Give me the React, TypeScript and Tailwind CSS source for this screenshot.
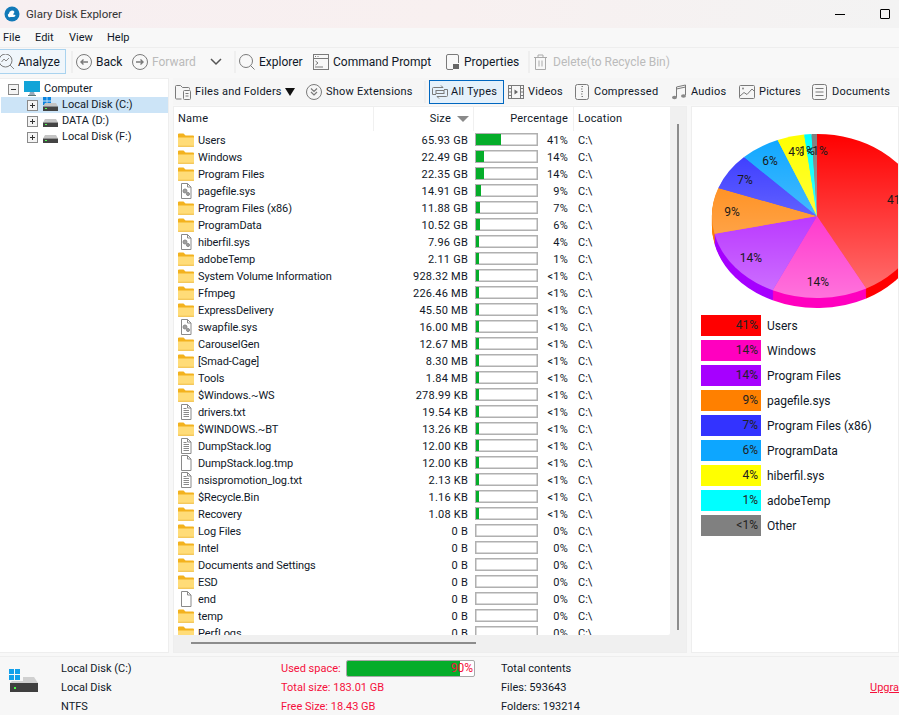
import React from "react";

const G = "#7a7a7a";
const Ico = ({ children, w = 16, h = 16, className = "" }: { children: React.ReactNode; w?: number; h?: number; className?: string }) => (
  <svg width={w} height={h} viewBox={`0 0 ${w} ${h}`} fill="none" stroke={G} strokeWidth="1" className={`shrink-0 ${className}`}>{children}</svg>
);

const Folder = () => (
  <svg width="16" height="14" viewBox="0 0 16 14" className="shrink-0">
    <path d="M0 2a1 1 0 0 1 1-1.5h4.5L7.5 2.5H15a1 1 0 0 1 1 1V6H0Z" fill="#f3b21e" />
    <path d="M0 4.5h16V13a1 1 0 0 1-1 1H1a1 1 0 0 1-1-1Z" fill="#ffdc78" />
    <path d="M0 13.2h16" stroke="#f0c050" />
  </svg>
);
const Page = ({ children }: { children?: React.ReactNode }) => (
  <svg width="16" height="16" viewBox="0 0 16 16" fill="none" className="shrink-0">
    <path d="M3.5.5h6l3.5 3.5v11.5H3.5Z" fill="#fff" stroke="#8a8a8a" />
    <path d="M9.5.5V4H13" stroke="#8a8a8a" />
    {children}
  </svg>
);
const FileIcon = ({ t }: { t?: string }) => {
  if (t === "sys")
    return (
      <Page>
        <circle cx="7" cy="8" r="2" fill="#a0a0a0" stroke="#8a8a8a" />
        <circle cx="10" cy="11" r="1.5" fill="#a0a0a0" stroke="#8a8a8a" />
      </Page>
    );
  if (t === "txt")
    return (
      <Page>
        <path d="M5.5 4.5h3M5.5 6.5h5.5M5.5 8.5h5.5M5.5 10.5h5.5M5.5 12.5h5.5" stroke="#8a8a8a" />
      </Page>
    );
  if (t === "blank") return <Page />;
  return <Folder />;
};

const rows: [string, string, number, string, string?][] = [
  ["Users", "65.93 GB", 25, "41%"],
  ["Windows", "22.49 GB", 8, "14%"],
  ["Program Files", "22.35 GB", 8, "14%"],
  ["pagefile.sys", "14.91 GB", 5, "9%", "sys"],
  ["Program Files (x86)", "11.88 GB", 4, "7%"],
  ["ProgramData", "10.52 GB", 4, "6%"],
  ["hiberfil.sys", "7.96 GB", 3, "4%", "sys"],
  ["adobeTemp", "2.11 GB", 3, "1%"],
  ["System Volume Information", "928.32 MB", 3, "<1%"],
  ["Ffmpeg", "226.46 MB", 3, "<1%"],
  ["ExpressDelivery", "45.50 MB", 3, "<1%"],
  ["swapfile.sys", "16.00 MB", 3, "<1%", "sys"],
  ["CarouselGen", "12.67 MB", 3, "<1%"],
  ["[Smad-Cage]", "8.30 MB", 3, "<1%"],
  ["Tools", "1.84 MB", 3, "<1%"],
  ["$Windows.~WS", "278.99 KB", 3, "<1%"],
  ["drivers.txt", "19.54 KB", 3, "<1%", "txt"],
  ["$WINDOWS.~BT", "13.26 KB", 3, "<1%"],
  ["DumpStack.log", "12.00 KB", 3, "<1%", "txt"],
  ["DumpStack.log.tmp", "12.00 KB", 3, "<1%", "blank"],
  ["nsispromotion_log.txt", "2.13 KB", 3, "<1%", "txt"],
  ["$Recycle.Bin", "1.16 KB", 3, "<1%"],
  ["Recovery", "1.08 KB", 3, "<1%"],
  ["Log Files", "0 B", 0, "0%"],
  ["Intel", "0 B", 0, "0%"],
  ["Documents and Settings", "0 B", 0, "0%"],
  ["ESD", "0 B", 0, "0%"],
  ["end", "0 B", 0, "0%", "blank"],
  ["temp", "0 B", 0, "0%"],
  ["PerfLogs", "0 B", 0, "0%"],
];

const legend: [string, string, string][] = [
  ["41%", "Users", "#ff0000"],
  ["14%", "Windows", "#ff00bf"],
  ["14%", "Program Files", "#a600ff"],
  ["9%", "pagefile.sys", "#ff8000"],
  ["7%", "Program Files (x86)", "#3333ff"],
  ["6%", "ProgramData", "#0da6ff"],
  ["4%", "hiberfil.sys", "#ffff00"],
  ["1%", "adobeTemp", "#00ffff"],
  ["<1%", "Other", "#808080"],
];

const CX = 125, CY = 109, RX = 105, RY = 82;
const stops = [0, 152, 205, 257.5, 290, 316, 338, 353, 357, 360];
const pt = (a: number, dy = 0) => {
  const r = (a * Math.PI) / 180;
  return `${(CX + RX * Math.sin(r)).toFixed(2)} ${(CY - RY * Math.cos(r) + dy).toFixed(2)}`;
};
const slice = (i: number, dy = 0) =>
  `M${CX} ${CY + dy}L${pt(stops[i], dy)}A${RX} ${RY} 0 ${stops[i + 1] - stops[i] > 180 ? 1 : 0} 1 ${pt(stops[i + 1], dy)}Z`;
const labels: [string, number, number, string?][] = [
  ["41%", 195, 93, "start"],
  ["14%", 126, 175],
  ["14%", 59, 151],
  ["9%", 40, 105],
  ["7%", 53, 73],
  ["6%", 78, 54],
  ["4%", 104, 45],
  ["1%", 115, 44],
  ["<1%", 125, 44],
];

const Pie = () => (
  <svg width="240" height="205" viewBox="0 0 240 205" className="shrink-0 block">
    <defs>
      <linearGradient id="sheen" gradientUnits="userSpaceOnUse" x1="0" y1="27" x2="0" y2="191">
        <stop offset="0" stopColor="#fff" stopOpacity="0" />
        <stop offset="1" stopColor="#fff" stopOpacity="0.45" />
      </linearGradient>
    </defs>
    {[10, 9, 8, 7, 6, 5, 4, 3, 2, 1].map((d) =>
      legend.map((l, i) => <path key={`${d}-${i}`} d={slice(i, d)} fill={l[2]} />)
    )}
    {legend.map((l, i) => (
      <path key={i} d={slice(i)} fill={l[2]} />
    ))}
    {legend.map((l, i) => (
      <path key={i} d={slice(i)} fill="url(#sheen)" />
    ))}
    {labels.map(([t, x, y, a], i) => (
      <text key={i} x={x} y={y + 4} textAnchor={(a as "start") || "middle"} fontSize="12" fill="#1a1a1a">{t}</text>
    ))}
  </svg>
);

const Disk = ({ win }: { win?: boolean }) => (
  <span className="relative w-[15px] h-[16px] shrink-0 block">
    {win && (
      <svg width="8" height="8" viewBox="0 0 8 8" className="absolute left-0 top-0">
        <path d="M0 0h3.6v3.6H0ZM4.4 0H8v3.6H4.4ZM0 4.4h3.6V8H0ZM4.4 4.4H8V8H4.4Z" fill="#0a84e0" />
      </svg>
    )}
    <svg width="15" height="8" viewBox="0 0 15 8" className="absolute left-0 top-[6px]">
      <path d="M2 0h11l2 3.5H0Z" fill="#c4c4c4" />
      <rect x="0" y="3.5" width="15" height="4.5" fill="#444" />
      <rect x="2" y="5" width="2" height="1" fill="#5f5" />
    </svg>
  </span>
);

const PlusBox = ({ minus }: { minus?: boolean }) => (
  <svg width="11" height="11" viewBox="0 0 11 11" className="shrink-0">
    <rect x=".5" y=".5" width="10" height="10" fill="#f4f4f4" stroke="#8a8a8a" />
    <path d={minus ? "M3 5.5h5" : "M3 5.5h5M5.5 3v5"} stroke="#333" />
  </svg>
);

const Sep = ({ className = "" }: { className?: string }) => <span className={`w-[2px] h-[22px] bg-[#efefef] shrink-0 ${className}`} />;

const Pct = ({ w }: { w: number }) => (
  <div className="w-[63px] h-[13px] border border-[#b0b0b0] bg-white shrink-0 shadow-[inset_0_0_0_0.5px_#b0b0b0]">
    <div className="h-full bg-[#05ad2a]" style={{ width: w }} />
  </div>
);

export default function App() {
  return (
    <div className="w-[899px] h-[715px] overflow-hidden flex flex-col bg-[#f8f8f8] text-[11px] leading-[16px] text-[#101828] font-['Roboto','Noto_Sans',sans-serif] whitespace-nowrap">
      {/* title */}
      <div className="h-[28px] shrink-0 flex items-center bg-gradient-to-r from-[#f7eff1] via-[#f8f0f0] to-[#f3f3f3]">
        <svg width="16" height="16" viewBox="0 0 16 16" className="ml-[4px] shrink-0">
          <circle cx="8" cy="8" r="7.5" fill="#1279b8" />
          <path d="M5 7.5a3 3 0 0 1 5.5-1.5L9 8.5l2.5.5a2 2 0 0 1-2 2H6.5a1.8 1.8 0 0 1-1.5-3.5Z" fill="#fff" />
        </svg>
        <span className="ml-[6px] text-[#333] text-[11.5px]">Glary Disk Explorer</span>
        <span className="ml-auto w-[10px] h-px bg-black mr-[35px]" />
        <span className="w-[10px] h-[10px] border border-black rounded-[1px] mr-[9px]" />
      </div>
      {/* menu */}
      <div className="h-[19px] shrink-0 flex items-center pl-[3px]">
        <span className="w-[32px]">File</span>
        <span className="w-[34px]">Edit</span>
        <span className="w-[38px]">View</span>
        <span>Help</span>
      </div>
      {/* toolbar */}
      <div className="h-[28px] shrink-0 border-t border-[#eeeeee] flex items-center text-[12px]">
        <div className="h-[25px] w-[67px] -ml-px border border-[#a9d3ef] bg-[#f0f6fb] flex items-center gap-[3px] shrink-0 overflow-hidden">
          <Ico className="-ml-[1px]">
            <circle cx="6.5" cy="6.5" r="6.5" />
            <path d="M11 11l4 4M2.5 8l2.5-3 2 2 3-3" stroke="#888" />
          </Ico>
          <span>Analyze</span>
        </div>
        <Sep className="ml-[5px]" />
        <Ico className="ml-[3px]">
          <circle cx="8" cy="8" r="7.5" />
          <path d="M12 8H5M7.5 5.5 5 8l2.500 2.500" strokeWidth="1.4" />
        </Ico>
        <span className="ml-[4px] w-[25px]">Back</span>
        <Ico className="ml-[11px]">
          <circle cx="8" cy="8" r="7.5" />
          <path d="M4 8h7M8.5 5.500 11 8l-2.500 2.500" strokeWidth="1.4" />
        </Ico>
        <span className="ml-[4px] w-[43px] text-[#bbbbbb]">Forward</span>
        <svg width="12" height="8" viewBox="0 0 12 8" className="ml-[15px] shrink-0" fill="none" stroke="#555" strokeWidth="1.5">
          <path d="M1 1l5 5 5-5" />
        </svg>
        <Sep className="ml-[12px]" />
        <Ico className="ml-[3px]">
          <circle cx="7" cy="7" r="6.5" />
          <path d="M11.5 11.5 15.5 15.5" />
        </Ico>
        <span className="ml-[4px] w-[43px]">Explorer</span>
        <Ico className="ml-[11px]">
          <rect x=".5" y=".5" width="15" height="15" />
          <path d="M.5 4.500h15M2 2.500h1M4.500 2.500h1M2.500 7l2.500 2-2.500 2M2 13h8" />
        </Ico>
        <span className="ml-[4px] w-[100px]">Command Prompt</span>
        <Ico className="ml-[12px]">
          <path d="M8 15.500H3A1.500 1.500 0 0 1 1.500 14V2A1.500 1.500 0 0 1 3 .5h9A1.500 1.500 0 0 1 13.500 2v7" />
          <rect x="8" y="10" width="6" height="5" fill="#666" stroke="none" />
        </Ico>
        <span className="ml-[3px] w-[53px]">Properties</span>
        <Sep className="ml-[11px]" />
        <Ico className="ml-[3px]">
          <path d="M1 3.500h13M5 3.500V1h5v2.500M2.500 3.500V15.500h10V3.500M6 6.500v6M9 6.500v6" stroke="#aaa" />
        </Ico>
        <span className="ml-[4px] text-[#bbbbbb]">Delete(to Recycle Bin)</span>
      </div>

      {/* main */}
      <div className="h-[575px] mt-[3px] shrink-0 flex">
        {/* tree */}
        <div className="w-[169px] shrink-0 bg-white border border-[#eeeeee] border-l-0 pl-[1px] pt-[2px]">
          <div className="h-[16px] flex items-center pl-[7px]">
            <PlusBox minus />
            <svg width="16" height="16" viewBox="0 0 16 16" className="ml-[5px] shrink-0">
              <rect x="0" y="0" width="16" height="11" fill="#12a4d8" />
              <path d="M6 11h4l1 3H5Z" fill="#9ab" />
              <path d="M4 14h8v1H4Z" fill="#577" />
            </svg>
            <span className="ml-[4px]">Computer</span>
          </div>
          <div className="h-[16px] flex items-center pl-[26px] bg-[#cce4f7]">
            <PlusBox />
            <span className="ml-[5px]"><Disk win /></span>
            <span className="ml-[4px]">Local Disk (C:)</span>
          </div>
          <div className="h-[16px] flex items-center pl-[26px]">
            <PlusBox />
            <span className="ml-[5px]"><Disk /></span>
            <span className="ml-[4px]">DATA (D:)</span>
          </div>
          <div className="h-[16px] flex items-center pl-[26px]">
            <PlusBox />
            <span className="ml-[5px]"><Disk /></span>
            <span className="ml-[4px]">Local Disk (F:)</span>
          </div>
        </div>

        {/* right */}
        <div className="flex-1 min-w-0 ml-[4px] flex flex-col">
          <div className="h-[27px] shrink-0 flex items-center overflow-hidden pl-[2px] bg-[#f6f6f6] tracking-[0.02em]">
            <Ico>
              <path d="M.5 14V2.500A1 1 0 0 1 1.500 1.500h4l2 2h6a1 1 0 0 1 1 1v1M.5 14a1 1 0 0 0 1 1h5" />
              <rect x="8.500" y="6.500" width="7" height="9" rx="1" />
              <path d="M10.500 9.500h3M10.500 12h3" />
            </Ico>
            <span className="ml-[4px] w-[87px]">Files and Folders</span>
            <svg width="10" height="8" viewBox="0 0 10 8" className="ml-[3px] shrink-0"><path d="M0 0h10L5 8Z" fill="#111" /></svg>
            <Ico className="ml-[11px]">
              <circle cx="8" cy="8" r="7.500" />
              <path d="M5 4.500l3 3 3-3M5 8l3 3 3-3" strokeWidth="1.2" />
            </Ico>
            <span className="ml-[4px] w-[88px]">Show Extensions</span>
            <Sep className="ml-[10px]" />
            <div className="ml-[3px] h-[24px] w-[75px] shrink-0 border border-[#0067c0] bg-[#e5f1fb] flex items-center pl-[2px]">
              <Ico>
                <path d="M4 10.500H.5v-6a1 1 0 0 1 1-1H11l-2-2M12 5.500h3.500v6a1 1 0 0 1-1 1H5l2 2" />
                <rect x="4" y="6.500" width="8" height="3" />
              </Ico>
              <span className="ml-[3px]">All Types</span>
            </div>
            <Ico className="ml-[4px]">
              <rect x=".5" y="1.500" width="15" height="13" />
              <path d="M3.500 1.500v13M12.500 1.500v13M.5 4.500h3M.5 8h3M.5 11.500h3M12.500 4.500h3M12.500 8h3M12.500 11.500h3" />
              <path d="M6.500 5.500l3.500 2.500-3.500 2.500Z" fill="#666" stroke="none" />
            </Ico>
            <span className="ml-[4px] w-[35px]">Videos</span>
            <Ico className="ml-[12px]" w={14}>
              <rect x=".5" y=".5" width="13" height="15" rx="2" />
              <path d="M6.500 2.500h1.500M6 5h1.500M6.500 7.500h1.500M6 10h1.500M6.500 12.500h1.500" strokeWidth="1.2" />
            </Ico>
            <span className="ml-[5px] w-[66px]">Compressed</span>
            <Ico className="ml-[11px]">
              <path d="M5.500 13V3l9-2v10" />
              <path d="M5.500 5l9-2" />
              <ellipse cx="3.500" cy="13.500" rx="2.500" ry="1.800" fill="#888" stroke="none" />
              <ellipse cx="12.500" cy="12" rx="2.500" ry="1.800" fill="#888" stroke="none" />
            </Ico>
            <span className="ml-[4px] w-[37px]">Audios</span>
            <Ico className="ml-[11px]">
              <rect x=".5" y="1.500" width="15" height="13" rx="1" />
              <circle cx="4" cy="4.500" r="1" fill="#888" stroke="none" />
              <path d="M1 12l4-3.500 3 2 5-5.500 2.500 2.500" />
            </Ico>
            <span className="ml-[4px] w-[42px]">Pictures</span>
            <Ico className="ml-[11px]" w={15}>
              <rect x=".5" y=".5" width="14" height="15" rx="2" />
              <path d="M3.500 4.500h8M3.500 8h8M3.500 11.500h8" />
            </Ico>
            <span className="ml-[5px]">Documents</span>
          </div>

          <div className="flex-1 min-h-0 mt-[1px] flex">
            {/* list */}
            <div className="w-[514px] shrink-0 border border-[#eeeeee] bg-[#f0f0f0] relative flex flex-col">
              <div className="flex-1 min-h-0 flex">
                <div className="w-[496px] h-[528px] bg-white overflow-hidden rounded-br-[2px]">
                  <div className="h-[24px] flex items-center tracking-[0.02em]">
                    <span className="w-[200px] shrink-0 pl-[4px] h-full flex items-center border-r border-[#f0f0f0]">Name</span>
                    <span className="w-[100px] shrink-0 h-full flex items-center justify-end pr-[4px] border-r border-[#f0f0f0]">
                      <span className="mr-[6px]">Size</span>
                      <svg width="12" height="6" viewBox="0 0 12 6" className="shrink-0"><path d="M0 0h12L6 6Z" fill="#8a8a8a" /></svg>
                    </span>
                    <span className="w-[100px] shrink-0 h-full flex items-center justify-end pr-[5px] border-r border-[#f0f0f0]">Percentage</span>
                    <span className="pl-[4px]">Location</span>
                  </div>
                  {rows.map(([name, size, w, pct, t], i) => (
                    <div key={i} className="h-[17px] flex items-center">
                      <span className="w-[24px] shrink-0 pl-[4px] flex justify-start"><FileIcon t={t} /></span>
                      <span className="w-[176px] shrink-0 truncate pt-[2px] tracking-[-0.01em]">{name}</span>
                      <span className="w-[94px] shrink-0 text-right pt-[2px] tracking-[0.02em]">{size}</span>
                      <span className="ml-[7px]"><Pct w={w} /></span>
                      <span className="w-[30px] shrink-0 text-right pt-[2px] tracking-[0.02em]">{pct}</span>
                      <span className="ml-[10px] pt-[2px]">C:\</span>
                    </div>
                  ))}
                </div>
                <div className="flex-1 flex justify-center pt-[17px] pb-[4px]">
                  <span className="w-[2px] h-full bg-[#8c8c8c]" />
                </div>
              </div>
              <div className="h-[18px] shrink-0 flex items-center pl-[17px]">
                <span className="w-[285px] h-[2px] bg-[#8c8c8c]" />
              </div>
            </div>
            {/* chart */}
            <div className="flex-1 min-w-0 ml-[4px] bg-white border border-[#eeeeee] overflow-hidden">
              <Pie />
              <div className="mt-[3px] pl-[9px] flex flex-col gap-[4px] text-[12px]">
                {legend.map(([p, n, c], i) => (
                  <div key={i} className="h-[21px] flex items-center">
                    <div className="w-[60px] h-[21px] shrink-0 text-right pr-[3px] leading-[21px] text-[#222]" style={{ backgroundColor: c }}>{p}</div>
                    <span className="ml-[6px]">{n}</span>
                  </div>
                ))}
              </div>
            </div>
          </div>
        </div>
      </div>

      {/* status */}
      <div className="mt-[3px] flex-1 min-h-0 border-t border-[#eeeeee] bg-[#f7f7f7] flex overflow-hidden">
        <div className="w-[61px] shrink-0 relative">
          <svg width="30" height="24" viewBox="0 0 30 24" className="absolute left-[9px] top-[12px]">
            <path d="M0 0h5v5H0ZM6 0h5v5H6ZM0 6h5v5H0ZM6 6h5v5H6Z" fill="#12a0ea" />
            <path d="M14 8h11l4 6H1l2-2h11Z" fill="#d0d0d0" />
            <rect x="1" y="14" width="28" height="9" fill="#3f3f3f" />
            <rect x="5" y="18" width="2" height="2" fill="#4f4" />
          </svg>
        </div>
        <div className="w-[220px] shrink-0 pt-[2px]">
          <div className="h-[19px] leading-[19px]">Local Disk (C:)</div>
          <div className="h-[19px] leading-[19px]">Local Disk</div>
          <div className="h-[19px] leading-[19px]">NTFS</div>
        </div>
        <div className="w-[220px] shrink-0 pt-[2px] text-[#f5103c]">
          <div className="h-[19px] leading-[19px] flex items-center">
            <span className="w-[65px] shrink-0">Used space:</span>
            <div className="w-[129px] h-[17px] border border-[#a8a8a8] rounded-[2px] bg-white relative overflow-hidden shrink-0">
              <div className="h-full w-[113px] bg-[#05ad2a]" />
              <span className="absolute right-[1px] top-0 leading-[15px] text-[12px]">90%</span>
            </div>
          </div>
          <div className="h-[19px] leading-[19px]">Total size: 183.01 GB</div>
          <div className="h-[19px] leading-[19px]">Free Size: 18.43 GB</div>
        </div>
        <div className="w-[369px] shrink-0 pt-[2px]">
          <div className="h-[19px] leading-[19px]">Total contents</div>
          <div className="h-[19px] leading-[19px]">Files: 593643</div>
          <div className="h-[19px] leading-[19px]">Folders: 193214</div>
        </div>
        <div className="pt-[21px] text-[#f5103c] underline leading-[19px]">Upgrade</div>
      </div>
    </div>
  );
}
